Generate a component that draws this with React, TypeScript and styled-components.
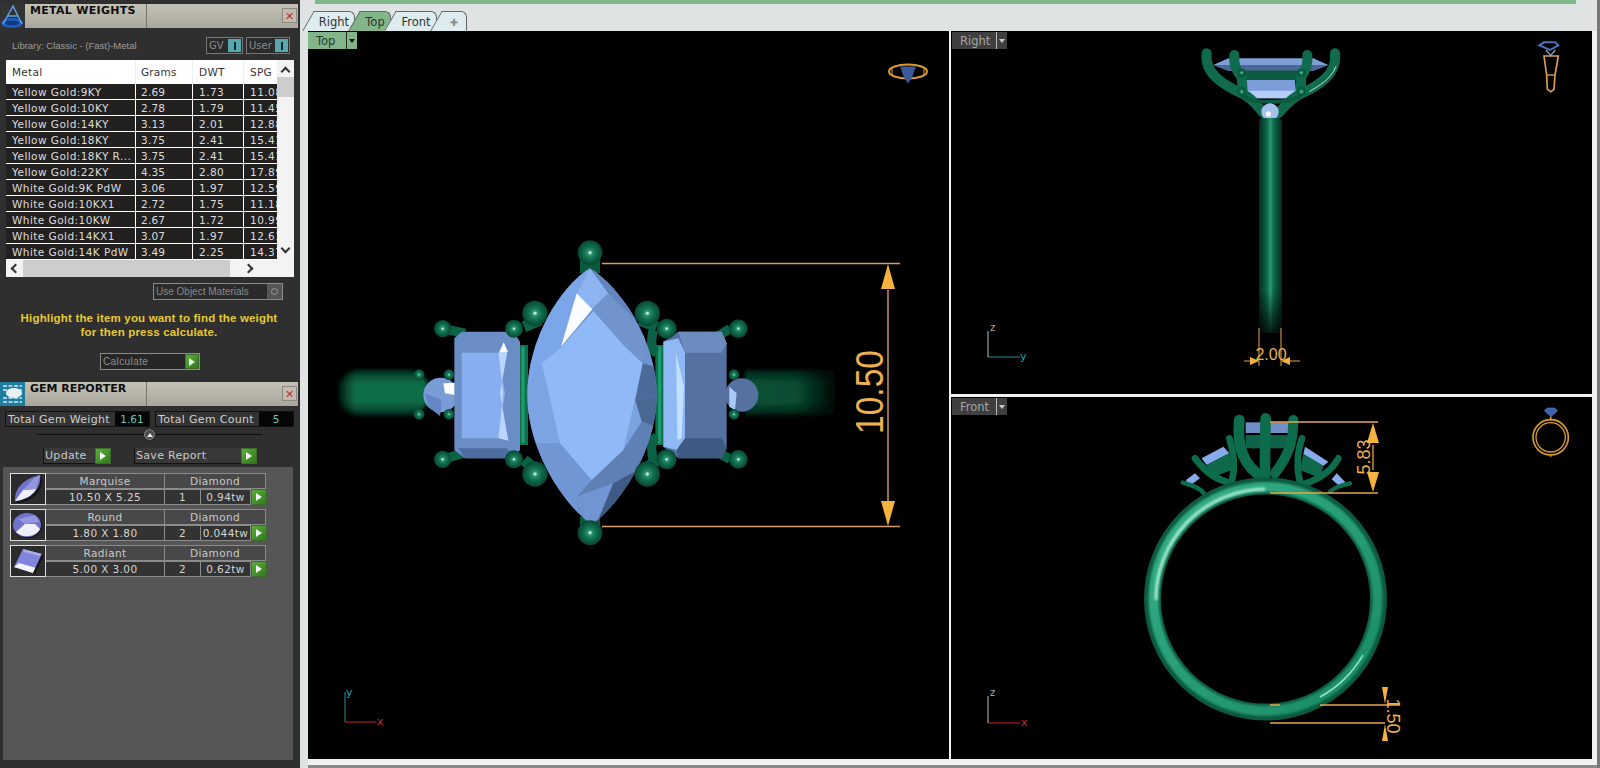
import styled, { createGlobalStyle } from "styled-components";

const GlobalStyle = createGlobalStyle`
  html, body { margin: 0; padding: 0; background: #2e2e2e; }
  #root { width: 1600px; height: 768px; overflow: hidden; }
  * { box-sizing: border-box; }
`

const Page = styled.div`
  display: flex;
  width: 1600px;
  height: 768px;
  font-family: "DejaVu Sans", Verdana, sans-serif;
`

/* ---------- left panels ---------- */
const Sidebar = styled.aside`
  width: 300px;
  height: 768px;
  flex: none;
  background: #2f2f2f;
  padding-top: 4px;
  display: flex;
  flex-direction: column;
  overflow: hidden;
`
const TitleBar = styled.div<{ $gap?: number }>`
  display: flex;
  height: 24px;
  flex: none;
  margin-top: ${p => p.$gap ?? 0}px;
  background: linear-gradient(#c4c2b6, #a9a79b);
  margin-right: 2px;
`
const TitleIcon = styled.div`
  width: 25px;
  height: 24px;
  flex: none;
  background: #333;
`
const TitleText = styled.div<{ $ls?: number }>`
  width: 122px;
  padding: 0 0 0 5px;
  font-size: 11px;
  font-weight: bold;
  letter-spacing: ${p => p.$ls ?? 0}px;
  color: #0d0d0d;
  border-right: 1px solid #77756a;
  white-space: nowrap;
`
const CloseBox = styled.button`
  margin: 4px 1px 0 auto;
  width: 15px;
  height: 15px;
  padding: 0;
  border: 1px solid #8c8a80;
  background: #c9b8ae;
  color: #a03a30;
  font-size: 11px;
  line-height: 12px;
  font-family: "Liberation Sans", sans-serif;
`
const LibraryRow = styled.div`
  display: flex;
  align-items: center;
  height: 32px;
  padding: 3px 10px 0 12px;
`
const LibraryText = styled.span`
  font-family: "Liberation Sans", sans-serif;
  font-size: 9.5px;
  color: #9c9c9c;
  flex: 1;
`
const Toggle = styled.div<{ $w: number }>`
  width: ${p => p.$w}px;
  height: 17px;
  margin-left: 3px;
  border: 1px solid #777;
  display: flex;
  align-items: center;
  justify-content: space-between;
  padding-left: 2px;
  font-size: 10px;
  color: #8b8b8b;
  background: #2b2b2b;
`
const ToggleKnob = styled.span`
  width: 13px;
  height: 13px;
  margin-right: 1px;
  background: #56a8ad;
  display: flex;
  align-items: center;
  justify-content: center;
  &::after {
    content: "";
    width: 2px;
    height: 8px;
    background: #123;
  }
`
const TableBox = styled.div`
  margin: 0 6px;
  width: 288px;
  height: 217px;
  flex: none;
  background: #f3f3f3;
  display: grid;
  grid-template-columns: 271px 17px;
  grid-template-rows: 200px 17px;
`
const Rows = styled.div`
  overflow: hidden;
`
const Row = styled.div<{ $head?: boolean }>`
  display: grid;
  grid-template-columns: 130px 57px 51px 33px;
  height: ${p => (p.$head ? 24 : 16)}px;
  background: #fff;
`
const Cell = styled.div<{ $head?: boolean }>`
  overflow: hidden;
  white-space: nowrap;
  font-size: 10.5px;
  padding-left: 6px;
  letter-spacing: ${p => (p.$head ? "0.3px" : "0.45px")};
  line-height: ${p => (p.$head ? 24 : 17)}px;
  color: ${p => (p.$head ? "#333" : "#dcdcdc")};
  background: ${p => (p.$head ? "#fff" : "#232120")};
  border-right: 1px solid ${p => (p.$head ? "#eee" : "#fff")};
  border-bottom: ${p => (p.$head ? "0" : "1px solid #fff")};
  &:last-child { border-right: 0; }
  &:nth-child(2) { padding-left: 5px; letter-spacing: 0.2px; }
`
const VScroll = styled.div`
  background: #f3f3f3;
  position: relative;
  &::before {
    content: "";
    display: block;
    height: 20px;
    margin-top: 17px;
    background: #cdcdcd;
  }
`
const ScrollGlyph = styled.span<{ $pos: string }>`
  position: absolute;
  ${p => p.$pos};
  width: 7px;
  height: 7px;
  border-left: 2px solid #333;
  border-top: 2px solid #333;
`
const HScroll = styled.div`
  position: relative;
  padding: 0 47px 0 17px;
  background: #f3f3f3;
  &::before {
    content: "";
    display: block;
    height: 17px;
    background: #cdcdcd;
  }
`
const OptionBox = styled.div`
  margin: 6px 0 0 153px;
  width: 130px;
  height: 17px;
  flex: none;
  border: 1px solid #8a8a8a;
  background: #2b2b2b;
  display: flex;
  align-items: center;
  justify-content: space-between;
  font-family: "Liberation Sans", sans-serif;
  font-size: 10px;
  color: #888;
  padding-left: 2px;
`
const OptionDot = styled.span`
  width: 15px;
  height: 15px;
  background: #555;
  display: flex;
  align-items: center;
  justify-content: center;
  &::after {
    content: "";
    width: 5px;
    height: 5px;
    border: 1px solid #999;
    border-radius: 50%;
  }
`
const Hint = styled.p`
  margin: 12px 0 0;
  text-align: center;
  width: 298px;
  font-family: "Liberation Sans", sans-serif;
  font-weight: bold;
  font-size: 11.5px;
  line-height: 13.5px;
  letter-spacing: 0.18px;
  color: #e8c92f;
`
const CalcButton = styled.div`
  margin: 14px 0 0 100px;
  width: 100px;
  height: 17px;
  flex: none;
  border: 1px solid #8a8a8a;
  background: #262626;
  display: flex;
  align-items: center;
  justify-content: space-between;
  font-family: "Liberation Sans", sans-serif;
  font-size: 10px;
  letter-spacing: 0.4px;
  color: #8e8e8e;
  padding-left: 2px;
`
const Play = styled.span<{ $size?: number }>`
  width: ${p => p.$size ?? 14}px;
  height: ${p => p.$size ?? 15}px;
  flex: none;
  background: linear-gradient(135deg, #5cae3a, #2f7a1d);
  display: flex;
  align-items: center;
  justify-content: center;
  border: 1px solid #3c6b2a;
  &::after {
    content: "";
    border-left: 6px solid #f2f2f2;
    border-top: 4px solid transparent;
    border-bottom: 4px solid transparent;
  }
`
const TotalsRow = styled.div`
  margin: 5px 0 0 5px;
  display: flex;
  gap: 5px;
`
const TotalBox = styled.div<{ $w: number }>`
  width: ${p => p.$w}px;
  height: 16px;
  border: 1px solid #111;
  display: flex;
  align-items: center;
  justify-content: space-between;
  font-size: 11px;
  letter-spacing: 0.3px;
  padding-left: 2px;
  color: #cfcfcf;
  background: #333;
`
const TotalValue = styled.span<{ $w: number }>`
  width: ${p => p.$w}px;
  height: 14px;
  background: #060606;
  color: #69c9c4;
  font-size: 10.5px;
  line-height: 14px;
  letter-spacing: 0;
  text-align: center;
`
const Slider = styled.div`
  position: relative;
  margin: 7px 0 0 37px;
  width: 225px;
  height: 1px;
  flex: none;
  background: #0e0e0e;
`
const SliderKnob = styled.span`
  position: absolute;
  left: 106px;
  top: -6px;
  width: 13px;
  height: 13px;
  border-radius: 50%;
  background: #4a4a4a;
  border: 1px solid #222;
  box-shadow: inset 0 0 0 1px #888;
  display: flex;
  align-items: center;
  justify-content: center;
  &::after {
    content: "";
    border-bottom: 4px solid #eee;
    border-left: 3px solid transparent;
    border-right: 3px solid transparent;
  }
`
const ActionRow = styled.div`
  margin: 13px 0 0 43px;
  display: flex;
  gap: 23px;
  flex: none;
`
const ActionButton = styled.div<{ $w: number }>`
  width: ${p => p.$w}px;
  height: 16px;
  display: flex;
  align-items: center;
  justify-content: space-between;
  font-size: 11px;
  letter-spacing: 0.3px;
  color: #c9c9c9;
  padding-left: 1px;
  border-left: 1px solid #111;
  border-bottom: 1px solid #111;
  background: #383838;
`
const GemPanel = styled.div`
  margin: 3px 7px 8px 3px;
  flex: 1;
  background: #565656;
  padding: 6px 0 0 7px;
  display: flex;
  flex-direction: column;
  gap: 4px;
`
const GemRow = styled.div`
  display: flex;
  width: 256px;
  height: 32px;
`
const GemThumb = styled.div`
  width: 36px;
  height: 32px;
  flex: none;
  border: 1px solid #ddd;
  background: #2b2b2b;
`
const GemGrid = styled.div`
  flex: 1;
  display: grid;
  grid-template-columns: 119px 36px 50px 15px;
  grid-template-rows: 16px 16px;
`
const GemCell = styled.div<{ $span?: number; $bright?: boolean }>`
  grid-column: span ${p => p.$span ?? 1};
  border: 1px solid #8b8b8b;
  border-left: 0;
  text-align: center;
  font-size: 10.5px;
  line-height: 14px;
  letter-spacing: 0.4px;
  white-space: nowrap;
  color: ${p => (p.$bright ? "#d4d4d4" : "#c8c8c8")};
  background: ${p => (p.$bright ? "#333" : "#484848")};
`

/* ---------- right side ---------- */
const Main = styled.main`
  flex: 1;
  background: #dfe3e3;
  border-right: 3px solid #777;
  display: flex;
  flex-direction: column;
`
const GreenStrip = styled.div`
  height: 4px;
  margin: 0 21px 0 15px;
  flex: none;
  background: #7fb98a;
`
const TabBar = styled.nav`
  height: 27px;
  flex: none;
  display: flex;
  align-items: flex-end;
  padding-left: 9px;
`
const Tab = styled.button<{ $active?: boolean; $w: number }>`
  position: relative;
  width: ${p => p.$w}px;
  height: 20px;
  padding: 0;
  margin-left: 5px;
  border: 1px solid #666;
  border-left: 0;
  border-bottom: 0;
  border-radius: 0 6px 0 0;
  background: ${p => (p.$active ? "#82b58a" : "#dcecef")};
  color: #333;
  font-size: 11.5px;
  font-family: "DejaVu Sans", sans-serif;
  &::before {
    content: "";
    position: absolute;
    top: -1px;
    bottom: 0;
    left: -6px;
    width: 12px;
    background: inherit;
    border-left: 1px solid #666;
    border-top: 1px solid #666;
    transform: skewX(-30deg);
    z-index: 0;
  }
  & > span { position: relative; z-index: 1; }
`
const PlusGlyph = styled.span`
  color: #8a8a8a;
  font-size: 10px;
`
const ViewGrid = styled.div`
  flex: 1;
  margin-left: 8px;
  padding: 0 5px 6px 0;
  display: grid;
  grid-template-columns: 641px 641px;
  grid-template-rows: 363px 362px;
  gap: 3px 2px;
  background: #f0f1f1;
  border-bottom: 3px solid #8a8a8a;
`
const Viewport = styled.section<{ $tall?: boolean }>`
  position: relative;
  background: #000;
  grid-row: ${p => (p.$tall ? "span 2" : "auto")};
  overflow: hidden;
  & > svg { display: block; width: 100%; height: 100%; }
`
const ViewTag = styled.div<{ $active?: boolean; $w: number }>`
  position: absolute;
  left: ${p => (p.$active ? 0 : 1)}px;
  top: 1px;
  width: ${p => p.$w}px;
  height: 17px;
  display: flex;
  align-items: center;
  justify-content: space-between;
  padding-left: 8px;
  font-size: 11.5px;
  background: ${p => (p.$active ? "#82b58a" : "#3f3f3f")};
  color: ${p => (p.$active ? "#2c3a2c" : "#a5a5a5")};
`
const TagArrow = styled.span<{ $active?: boolean }>`
  width: 11px;
  height: 17px;
  border-left: 1px solid ${p => (p.$active ? "#1f2c1f" : "#bbb")};
  display: flex;
  align-items: center;
  justify-content: center;
  &::after {
    content: "";
    border-top: 4px solid ${p => (p.$active ? "#111" : "#ccc")};
    border-left: 3px solid transparent;
    border-right: 3px solid transparent;
  }
`

const metals = [
  ["Yellow Gold:9KY", "2.69", "1.73", "11.08"],
  ["Yellow Gold:10KY", "2.78", "1.79", "11.45"],
  ["Yellow Gold:14KY", "3.13", "2.01", "12.88"],
  ["Yellow Gold:18KY", "3.75", "2.41", "15.41"],
  ["Yellow Gold:18KY R...", "3.75", "2.41", "15.41"],
  ["Yellow Gold:22KY", "4.35", "2.80", "17.89"],
  ["White Gold:9K PdW", "3.06", "1.97", "12.59"],
  ["White Gold:10KX1", "2.72", "1.75", "11.18"],
  ["White Gold:10KW", "2.67", "1.72", "10.99"],
  ["White Gold:14KX1", "3.07", "1.97", "12.61"],
  ["White Gold:14K PdW", "3.49", "2.25", "14.37"],
];

const gems = [
  { name: "Marquise", size: "10.50 X 5.25", count: "1", weight: "0.94tw", thumb: "marquise" },
  { name: "Round", size: "1.80 X 1.80", count: "2", weight: "0.044tw", thumb: "round" },
  { name: "Radiant", size: "5.00 X 3.00", count: "2", weight: "0.62tw", thumb: "radiant" },
];

function GemIcon({ kind }: { kind: string }) {
  return (
    <svg width="34" height="30" viewBox="0 0 34 30">
      {kind === "marquise" && (
        <g>
          <path d="M4 27 C3 14 14 4 29 1 C31 14 20 26 4 27Z" fill="#161616" transform="translate(2 2)" />
          <path d="M4 27 C3 14 14 4 29 1 C31 14 20 26 4 27Z" fill="#6f73c9" />
          <path d="M4 27 L12 16 L25 15 C22 21 14 26 4 27Z" fill="#eef" />
          <path d="M12 16 L22 5 L29 1 L25 15Z" fill="#9296e0" />
        </g>
      )}
      {kind === "round" && (
        <g>
          <ellipse cx="17" cy="16" rx="14" ry="12" fill="#161616" />
          <ellipse cx="16" cy="15" rx="14" ry="12" fill="#6f73c9" />
          <path d="M5 22 L14 14 L24 14 L29 19 C24 28 10 28 5 22Z" fill="#f0f0fa" />
          <path d="M7 9 L24 5 L29 12 L14 14Z" fill="#9296e0" />
        </g>
      )}
      {kind === "radiant" && (
        <g>
          <path d="M12 3 L31 8 L22 27 L3 21Z" fill="#8084dc" />
          <path d="M3 21 L8 17 L25 22 L22 27Z" fill="#f4f4fc" />
          <path d="M12 3 L31 8 L28 10 L13 6Z" fill="#a6a9ea" />
          <path d="M31 8 L22 27 L24 28 L33 10Z" fill="#161616" />
        </g>
      )}
    </svg>
  )
}

function Sphere({ x, y, r }: { x: number; y: number; r: number }) {
  return (
    <g>
      <circle cx={x} cy={y} r={r} fill="url(#ballGreen)" />
      <circle cx={x} cy={y} r={r * 0.14} fill="#d8f3e6" opacity=".8" />
    </g>
  )
}

const marquiseOutline = "M570 115 C660 170 770 330 770 495 C770 660 660 820 585 875 H565 C490 820 382 660 382 495 C382 330 480 170 570 115Z";

const marquiseFacets: [string, string][] = [
  ["570,115 530,190 483,350 425,400 382,495 340,400 400,250 500,100", "#7ba6ea"],
  ["570,115 625,190 575,238 530,190", "#8cb4f0"],
  ["570,115 700,180 780,340 625,190", "#6385bd"],
  ["625,190 735,320 728,400 670,345 575,238", "#7294cc"],
  ["728,400 800,420 800,495 705,510", "#4c6b9b"],
  ["705,510 800,495 790,600 725,575", "#496892"],
  ["670,660 725,575 705,510", "#7ba3e0"],
  ["575,750 670,660 725,575 790,600 740,720 640,760 530,800", "#5f80b5"],
  ["530,800 640,760 590,890 560,890", "#7095d2"],
  ["590,880 680,800 750,700 640,760", "#3f5a84"],
  ["480,640 575,750 530,800 540,900 420,760 370,640", "#7097d4"],
  ["425,400 480,640 370,640 360,495", "#7ca3e2"],
  ["580,243 670,345 728,400 705,510 670,660 575,750 480,640 425,400 485,350", "#8fbaf7"],
  ["530,190 577,238 483,350", "#fafcff"],
];

const sideProps: [number, number, number][] = [
  [570, 68, 37], [570, 908, 37], [405, 250, 38], [742, 250, 38], [405, 732, 38], [742, 732, 38],
  [128, 296, 26], [342, 296, 27], [800, 296, 30], [1015, 296, 28],
  [128, 688, 26], [342, 688, 27], [800, 688, 30], [1015, 688, 28],
  [57, 434, 16], [147, 434, 16], [57, 553, 16], [147, 553, 16], [1002, 434, 16], [1002, 553, 16],
];

function TopDrawing() {
  return (
    <svg viewBox="308 31 641 728">
      <defs>
        <radialGradient id="ballGreen" cx=".5" cy=".5" r=".55">
          <stop offset="0" stopColor="#3fa583" />
          <stop offset=".45" stopColor="#0f7050" />
          <stop offset="1" stopColor="#073f2d" />
        </radialGradient>
        <linearGradient id="shankGreen" x1="0" y1="0" x2="0" y2="1">
          <stop offset="0" stopColor="#04301f" />
          <stop offset=".3" stopColor="#0b6d48" />
          <stop offset=".7" stopColor="#0b6d48" />
          <stop offset="1" stopColor="#04301f" />
        </linearGradient>
        <linearGradient id="shankFadeL" x1="0" y1="0" x2="1" y2="0">
          <stop offset="0" stopColor="#000" stopOpacity=".75" />
          <stop offset=".18" stopColor="#000" stopOpacity="0" />
        </linearGradient>
        <linearGradient id="shankFadeR" x1="0" y1="0" x2="1" y2="0">
          <stop offset="0" stopColor="#000" stopOpacity=".25" />
          <stop offset=".55" stopColor="#000" stopOpacity=".3" />
          <stop offset="1" stopColor="#000" stopOpacity="1" />
        </linearGradient>
        <linearGradient id="vertShank" x1="0" y1="0" x2="1" y2="0">
          <stop offset="0" stopColor="#042c1e" />
          <stop offset=".35" stopColor="#0e6a4b" />
          <stop offset=".5" stopColor="#2a9a74" />
          <stop offset=".62" stopColor="#0f6d4c" />
          <stop offset="1" stopColor="#042c1e" />
        </linearGradient>
        <filter id="soft"><feGaussianBlur stdDeviation="2" /></filter>
        <filter id="softer"><feGaussianBlur stdDeviation="1" /></filter>
        <clipPath id="marquiseClip"><path d={marquiseOutline} /></clipPath>
      </defs>
      <g filter="url(#soft)">
        <rect x="339" y="370" width="90" height="45" rx="20" fill="url(#shankGreen)" />
        <rect x="339" y="370" width="90" height="45" rx="20" fill="url(#shankFadeL)" />
        <rect x="745" y="370" width="94" height="45" fill="url(#shankGreen)" />
        <rect x="745" y="370" width="94" height="45" fill="url(#shankFadeR)" />
      </g>
      <g transform="translate(400 230) scale(.33333)">
        <rect x="360" y="345" width="24" height="300" fill="#0e6e4c" />
        <rect x="364" y="350" width="10" height="290" fill="#1f9a6f" />
        <rect x="766" y="345" width="24" height="300" fill="#0e6e4c" />
        <rect x="774" y="350" width="10" height="290" fill="#1f9a6f" />
        <path d="M540 60 H600 V130 H540Z M540 860 H600 V920 H540Z" fill="#0a5a3e" />
        <path d="M372 290 L420 270 M372 690 L420 730 M770 290 L720 270 M770 690 L720 730" stroke="#0c6246" strokeWidth="34" />
        <path d="M760 300 C750 340 755 360 770 370 M760 690 C750 650 755 630 770 620 M990 296 L950 320 M990 688 L950 665 M128 296 L195 310 M128 688 L190 670" stroke="#0c6246" strokeWidth="28" fill="none" />
        <circle cx="122" cy="495" r="52" fill="#7a9cd6" />
        <polygon points="130,460 165,458 165,495 135,490" fill="#fbfdff" />
        <polygon points="75,490 125,510 120,558 85,530" fill="#6287c4" />
        <circle cx="1025" cy="495" r="50" fill="#56719f" />
        <polygon points="988,470 1010,490 1005,540 988,530" fill="#a9c8f8" />
        <polygon points="163,325 185,305 340,305 360,335 360,660 340,685 195,685 163,660" fill="#6a8dc6" />
        <polygon points="185,368 295,368 315,490 295,625 185,625" fill="#86aef0" />
        <polygon points="295,368 322,365 300,490 325,632 295,625 310,490" fill="#b9d6ff" />
        <polygon points="297,368 311,337 324,365" fill="#f9fbff" />
        <polygon points="175,655 320,655 345,685 195,685" fill="#4d6d9e" />
        <polygon points="835,305 965,305 980,340 980,655 965,685 835,685 790,650 790,335" fill="#56719f" />
        <polygon points="835,305 965,305 980,340 965,368 855,368" fill="#6c8cc0" />
        <polygon points="790,335 835,325 855,368 855,625 830,660 790,650" fill="#8eb9f5" />
        <polygon points="828,368 852,470 845,625 832,630" fill="#c2e0ff" />
        <polygon points="830,660 855,625 965,625 980,655 965,685 835,685" fill="#3f5a82" />
        <path d={marquiseOutline} fill="#6e92cc" />
        <g clipPath="url(#marquiseClip)">
          {marquiseFacets.map(([points, fill]) => <polygon key={points} points={points} fill={fill} />)}
        </g>
        {sideProps.map(([x, y, r]) => <Sphere key={`${x}-${y}`} x={x} y={y} r={r} />)}
      </g>
      <path d="M602 263.5 H900 M602 526.5 H900 M888 290 V505" stroke="#d69b6c" strokeWidth="1.4" fill="none" />
      <polygon points="888,264 881,289 895,289" fill="#f5b33e" />
      <polygon points="888,526 881,501 895,501" fill="#f5b33e" />
      <text transform="translate(883 392) rotate(-90)" textAnchor="middle" fontFamily="Liberation Sans" fontSize="38" textLength="84" lengthAdjust="spacingAndGlyphs" fill="#efb04e">10.50</text>
      <g transform="translate(908 71.5)" fill="none">
        <ellipse rx="19" ry="7" stroke="#d99a2a" strokeWidth="2" />
        <path d="M-8 -5 H8 L4 6 L0 12 L-4 6Z" fill="#3c5a9a" />
        <path d="M-16 -3 V3 M16 -3 V3" stroke="#d99a2a" />
      </g>
      <path d="M345 722 H376" stroke="#c22" />
      <path d="M345 722 V692" stroke="#2a8d92" />
      <text x="346" y="696" fontSize="11" fill="#35a0a5" fontFamily="DejaVu Sans">y</text>
      <text x="377" y="725" fontSize="11" fill="#d02a2a" fontFamily="DejaVu Sans">x</text>
    </svg>
  )
}

function RightDrawing() {
  return (
    <svg viewBox="951 31 641 363">
      <defs>
        <linearGradient id="shankFadeDown" x1="0" y1="0" x2="0" y2="1">
          <stop offset=".8" stopColor="#000" stopOpacity="0" />
          <stop offset="1" stopColor="#000" stopOpacity=".8" />
        </linearGradient>
      </defs>
      <g transform="translate(1100 30) scale(.33333)">
        <polygon points="340,105 385,85 640,85 685,105 640,122 385,122" fill="#7e9ed6" />
        <polygon points="340,105 385,122 640,122 685,105" fill="#4a6896" />
        <rect x="410" y="122" width="200" height="30" fill="#0c5a40" />
        <polygon points="435,150 585,150 590,205 440,205" fill="#7c9ed8" />
        <polygon points="440,182 590,182 590,205 440,205" fill="#b4cff5" />
        <g fill="none" stroke="#0f6b4c" strokeWidth="30" strokeLinecap="round">
          <path d="M320 70 C312 130 370 165 425 190 C465 210 475 235 492 250" />
          <path d="M705 70 C712 130 660 165 605 190 C565 210 550 235 535 250" />
          <path d="M403 75 C400 105 410 125 425 140 L428 185" />
          <path d="M622 75 C625 105 615 125 604 140 L602 185" />
        </g>
        <path d="M425 192 C440 212 470 215 510 215 C550 215 590 212 604 192" fill="none" stroke="#0c5a40" strokeWidth="12" />
        <path d="M628 185 C660 165 690 150 708 110" stroke="#bfe8d4" strokeWidth="3" fill="none" />
        <circle cx="510" cy="246" r="26" fill="#a6c0ee" />
        <circle cx="505" cy="252" r="8" fill="#f4f7ff" />
        <Sphere x={425} y={185} r={13} />
        <Sphere x={604} y={185} r={13} />
        <Sphere x={425} y={128} r={12} />
        <Sphere x={604} y={128} r={12} />
      </g>
      <rect x="1259" y="118" width="23" height="215" rx="4" fill="url(#vertShank)" />
      <rect x="1259" y="118" width="23" height="215" rx="4" fill="url(#shankFadeDown)" />
      <path d="M1259 328 V366 M1281 328 V366" stroke="#e3a648" />
      <path d="M1244 361 H1258 M1283 361 H1300" stroke="#e3a648" />
      <polygon points="1259,361 1250,357 1250,365" fill="#f5b33e" />
      <polygon points="1281,361 1290,357 1290,365" fill="#f5b33e" />
      <text x="1271" y="360" textAnchor="middle" fontFamily="Liberation Sans" fontSize="16" fill="#efb04e">2.00</text>
      <g transform="translate(1440 0) scale(.33333)" fill="none">
        <path d="M298 136 L312 127 H345 L355 136 L330 150 Z" stroke="#4f72bc" strokeWidth="6" />
        <path d="M318 150 L332 166 L346 150" stroke="#9aa4b8" strokeWidth="4" />
        <path d="M312 168 H355 L345 225 L342 268 L333 275 L322 268 L320 225 Z" stroke="#dc9f52" strokeWidth="5" />
        <path d="M320 225 H345" stroke="#dc9f52" strokeWidth="4" />
      </g>
      <path d="M988 357 H1020" stroke="#2a8d92" />
      <path d="M988 357 V331" stroke="#bbb" />
      <text x="990" y="331" fontSize="10" fill="#aaa" fontFamily="DejaVu Sans">z</text>
      <text x="1020" y="360" fontSize="11" fill="#35a0a5" fontFamily="DejaVu Sans">y</text>
    </svg>
  )
}

function FrontDrawing() {
  return (
    <svg viewBox="951 397 641 362">
      <defs>
        <linearGradient id="ringGreen" x1="0" y1="0" x2="1" y2="1">
          <stop offset="0" stopColor="#35b089" />
          <stop offset="1" stopColor="#1a8a64" />
        </linearGradient>
      </defs>
      <g transform="translate(1100 390) scale(.33333)">
        <rect x="437" y="97" width="130" height="32" fill="#6f8fc6" />
        <rect x="437" y="135" width="125" height="40" fill="#0e6247" />
        <polygon points="305,205 370,170 388,190 320,225" fill="#86acec" />
        <polygon points="320,225 388,190 395,240 330,265" fill="#0e6a4a" />
        <polygon points="615,170 685,215 670,228 610,192" fill="#86acec" />
        <polygon points="610,192 670,228 660,265 600,240" fill="#0e6a4a" />
        <polygon points="258,270 285,250 300,265 265,290" fill="#86acec" />
        <polygon points="710,250 735,275 725,295 695,268" fill="#86acec" />
        <g fill="none" stroke="#0d6c4b" strokeLinecap="round">
          <path d="M418 90 C410 170 430 230 490 262" strokeWidth="32" />
          <path d="M497 85 C495 150 495 220 495 262" strokeWidth="32" />
          <path d="M580 90 C580 150 570 190 525 250" strokeWidth="30" />
          <path d="M388 145 C405 200 405 240 395 275" strokeWidth="20" />
          <path d="M285 205 C320 250 350 270 392 278" strokeWidth="20" />
          <path d="M606 145 C590 190 590 240 600 275" strokeWidth="20" />
          <path d="M715 205 C690 250 650 270 612 282" strokeWidth="20" />
          <path d="M248 278 C275 285 300 295 312 310" strokeWidth="13" />
          <path d="M750 280 C725 285 705 290 690 305" strokeWidth="13" />
        </g>
      </g>
      <circle cx="1265.5" cy="599" r="113" fill="none" stroke="#0c5a40" strokeWidth="17" />
      <circle cx="1265.5" cy="599" r="112" fill="none" stroke="url(#ringGreen)" strokeWidth="10" filter="url(#softer)" />
      <path d="M1156 600 A110 110 0 0 1 1265 489" fill="none" stroke="#a8ecd0" strokeWidth="3" filter="url(#softer)" />
      <path d="M1363 655 A112 112 0 0 1 1320 697" fill="none" stroke="#8fe3bf" strokeWidth="1.5" />
      <path d="M1270 422 H1378 M1270 493 H1378" stroke="#e3a648" strokeWidth="1.3" />
      <path d="M1373 445 V470" stroke="#e3a648" strokeWidth="1.3" />
      <polygon points="1373,423 1367,443 1379,443" fill="#f5b33e" />
      <polygon points="1373,492 1367,472 1379,472" fill="#f5b33e" />
      <text transform="translate(1370 457) rotate(-90)" textAnchor="middle" fontFamily="Liberation Sans" fontSize="18" fill="#efb04e">5.83</text>
      <path d="M1270 705 H1280 M1320 705 H1400 M1270 723 H1385" stroke="#e3a648" strokeWidth="1.3" />
      <polygon points="1385,704 1382,687 1388,687" fill="#f5b33e" />
      <polygon points="1385,724 1382,741 1388,741" fill="#f5b33e" />
      <text transform="translate(1387 716) rotate(90)" textAnchor="middle" fontFamily="Liberation Sans" fontSize="18" fill="#efb04e">1.50</text>
      <g transform="translate(1440 380) scale(.33333)" fill="none">
        <path d="M313 92 L322 84 H344 L353 92 L333 110 Z" fill="#3f63aa" stroke="#4f72bc" strokeWidth="2" />
        <circle cx="332" cy="172" r="53" stroke="#d99a2a" strokeWidth="5" />
        <circle cx="332" cy="172" r="44" stroke="#d99a2a" strokeWidth="4" />
        <path d="M332 110 V122 M332 222 V230" stroke="#d99a2a" strokeWidth="5" />
      </g>
      <path d="M988 723 H1020" stroke="#c22" />
      <path d="M988 723 V696" stroke="#bbb" />
      <text x="990" y="696" fontSize="10" fill="#aaa" fontFamily="DejaVu Sans">z</text>
      <text x="1021" y="726" fontSize="11" fill="#d02a2a" fontFamily="DejaVu Sans">x</text>
    </svg>
  )
}

function App() {
  return (
    <Page>
      <GlobalStyle />
      <Sidebar>
        <TitleBar>
          <TitleIcon>
            <svg width="25" height="24" viewBox="0 0 25 24">
              <ellipse cx="12" cy="19" rx="11" ry="5" fill="#1f5fc0" />
              <ellipse cx="12" cy="19" rx="7" ry="2.5" fill="#123a80" />
              <path d="M3 20 L13 2 L22 20 M7 12 H18" fill="none" stroke="#5fa0e8" strokeWidth="1.5" />
            </svg>
          </TitleIcon>
          <TitleText $ls={0.3}>METAL WEIGHTS</TitleText>
          <CloseBox>✕</CloseBox>
        </TitleBar>
        <LibraryRow>
          <LibraryText>Library: Classic - (Fast)-Metal</LibraryText>
          <Toggle $w={37}>GV<ToggleKnob /></Toggle>
          <Toggle $w={44}>User<ToggleKnob /></Toggle>
        </LibraryRow>
        <TableBox>
          <Rows>
            <Row $head>
              {["Metal", "Grams", "DWT", "SPG"].map(h => <Cell $head key={h}>{h}</Cell>)}
            </Row>
            {metals.map(row => (
              <Row key={row[0]}>
                {row.map((value, i) => <Cell key={i}>{value}</Cell>)}
              </Row>
            ))}
          </Rows>
          <VScroll>
            <ScrollGlyph $pos="top: 8px; left: 5px; transform: rotate(45deg)" />
            <ScrollGlyph $pos="bottom: 8px; left: 5px; transform: rotate(225deg)" />
          </VScroll>
          <HScroll>
            <ScrollGlyph $pos="top: 5px; left: 6px; transform: rotate(-45deg)" />
            <ScrollGlyph $pos="top: 5px; right: 25px; transform: rotate(135deg)" />
          </HScroll>
          <div />
        </TableBox>
        <OptionBox>Use Object Materials<OptionDot /></OptionBox>
        <Hint>Highlight the item you want to find the weight<br />for then press calculate.</Hint>
        <CalcButton>Calculate<Play /></CalcButton>
        <TitleBar $gap={12}>
          <TitleIcon>
            <svg width="25" height="24" viewBox="0 0 25 24">
              <rect width="25" height="24" fill="#1f7ea0" />
              <path d="M3 4 H22 M3 8 H22 M3 16 H22 M3 20 H22" stroke="#cfeaf2" strokeWidth="1.6" strokeDasharray="4 1.5" />
              <ellipse cx="14" cy="11" rx="8" ry="5" fill="#e8f2f6" />
            </svg>
          </TitleIcon>
          <TitleText>GEM REPORTER</TitleText>
          <CloseBox>✕</CloseBox>
        </TitleBar>
        <TotalsRow>
          <TotalBox $w={145}>Total Gem Weight<TotalValue $w={34}>1.61</TotalValue></TotalBox>
          <TotalBox $w={139}>Total Gem Count<TotalValue $w={34}>5</TotalValue></TotalBox>
        </TotalsRow>
        <Slider><SliderKnob /></Slider>
        <ActionRow>
          <ActionButton $w={68}>Update<Play $size={16} /></ActionButton>
          <ActionButton $w={123}>Save Report<Play $size={16} /></ActionButton>
        </ActionRow>
        <GemPanel>
          {gems.map(gem => (
            <GemRow key={gem.name}>
              <GemThumb><GemIcon kind={gem.thumb} /></GemThumb>
              <GemGrid>
                <GemCell>{gem.name}</GemCell>
                <GemCell $span={3}>Diamond</GemCell>
                <GemCell $bright>{gem.size}</GemCell>
                <GemCell $bright>{gem.count}</GemCell>
                <GemCell $bright>{gem.weight}</GemCell>
                <Play $size={16} />
              </GemGrid>
            </GemRow>
          ))}
        </GemPanel>
      </Sidebar>
      <Main>
        <GreenStrip />
        <TabBar>
          <Tab $w={41}><span>Right</span></Tab>
          <Tab $active $w={31}><span>Top</span></Tab>
          <Tab $w={41}><span>Front</span></Tab>
          <Tab $w={25}><PlusGlyph>✚</PlusGlyph></Tab>
        </TabBar>
        <ViewGrid>
          <Viewport $tall>
            <TopDrawing />
            <ViewTag $active $w={49}>Top<TagArrow $active /></ViewTag>
          </Viewport>
          <Viewport>
            <RightDrawing />
            <ViewTag $w={55}>Right<TagArrow /></ViewTag>
          </Viewport>
          <Viewport>
            <FrontDrawing />
            <ViewTag $w={55}>Front<TagArrow /></ViewTag>
          </Viewport>
        </ViewGrid>
      </Main>
    </Page>
  )
}
export default App;
